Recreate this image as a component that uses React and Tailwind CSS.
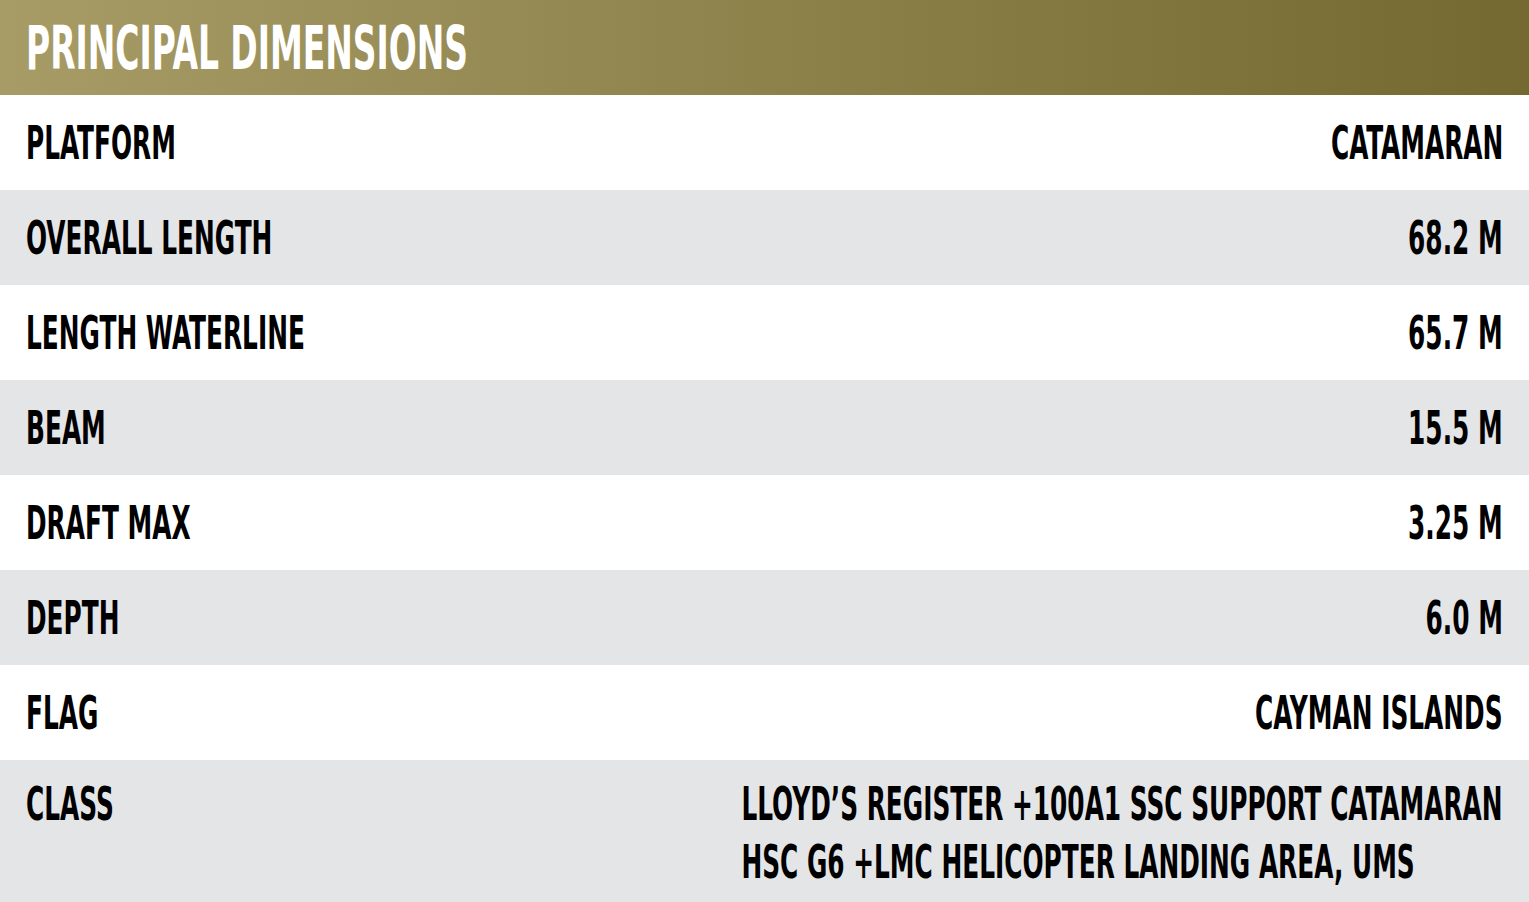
const font = { fontFamily: "'DejaVu Sans Condensed', 'DejaVu Sans', sans-serif" };

const rows = [
  ["Platform", "Catamaran"],
  ["Overall length", "68.2 M"],
  ["Length waterline", "65.7 M"],
  ["Beam", "15.5 M"],
  ["Draft max", "3.25 M"],
  ["Depth", "6.0 M"],
  ["Flag", "Cayman Islands"],
];

export default function App() {
  return (
    <div className="w-full bg-white uppercase text-black" style={font}>
      <div className="flex h-[95px] items-center bg-gradient-to-r from-[#a89c66] to-[#746930] px-[26px]">
        <h1 className="origin-left scale-x-[0.61] whitespace-nowrap text-[60px] font-bold leading-none text-white">
          Principal Dimensions
        </h1>
      </div>

      {rows.map(([label, value], i) => (
        <div
          key={label}
          className={`flex h-[95px] items-center justify-between px-[26px] ${
            i % 2 ? "bg-[#e4e5e7]" : "bg-white"
          }`}
        >
          <span className="origin-left scale-x-[0.6] whitespace-nowrap text-[46px] font-bold leading-none">
            {label}
          </span>
          <span className="origin-right scale-x-[0.6] whitespace-nowrap text-[46px] font-bold leading-none">
            {value}
          </span>
        </div>
      ))}

      <div className="flex items-start justify-between bg-[#e4e5e7] px-[26px] pb-[24px] pt-[15px]">
        <span className="origin-left scale-x-[0.6] whitespace-nowrap text-[46px] font-bold leading-[58px]">
          Class
        </span>
        <span className="origin-right scale-x-[0.6] whitespace-nowrap text-[46px] font-bold leading-[58px]">
          Lloyd’s Register +100A1 SSC Support Catamaran
          <br />
          HSC G6 +LMC Helicopter Landing Area, UMS
        </span>
      </div>
    </div>
  );
}
